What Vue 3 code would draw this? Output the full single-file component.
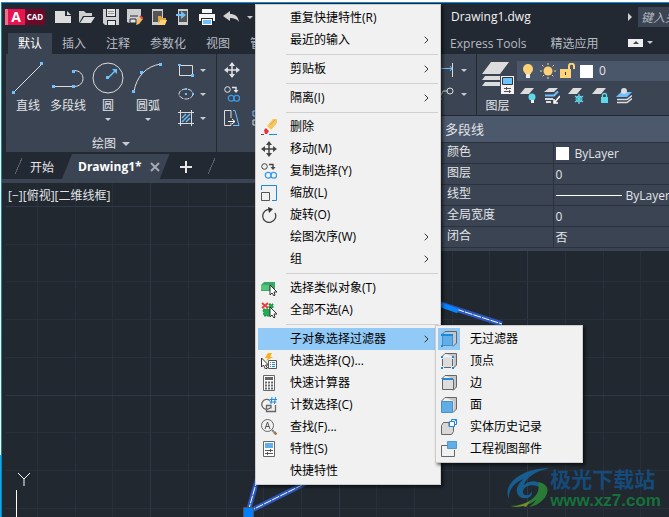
<template>
  <div class="desktop">
    <svg class="sprite" aria-hidden="true">
      <symbol id="i-erase" viewBox="0 0 16 16">
        <path d="M6 7l6-7h4v4l-6 7z" fill="#f6c65f" /><path d="M9 6l5-5" stroke="#e3a63c" />
        <path d="M5 8l5 3-1 1-5-3z" fill="#fff" />
        <path d="M3 11l2-2 3 3-2 3H4z" fill="#f0303a" />
        <path d="M0 15.500h3" stroke="#555" /><path d="M8 15.500h8" stroke="#1e88dc" />
      </symbol>
      <symbol id="i-move" viewBox="0 0 16 16">
        <path d="M8 2v12M2 8h12" stroke="currentColor" stroke-width="1.500" />
        <path d="M8 0l3 4H5zM8 16l3-4H5zM0 8l4-3v6zM16 8l-4-3v6z" fill="currentColor" />
      </symbol>
      <symbol id="i-copy" viewBox="0 0 16 16" fill="none">
        <circle cx="3.500" cy="3.500" r="2.800" stroke="currentColor" />
        <path d="M8 1.500h4v3" stroke="currentColor" stroke-width="1.400" /><path d="M9.500 4h5L12 7z" fill="currentColor" />
        <circle cx="7.200" cy="12.300" r="2.900" stroke="#3a9be8" stroke-width="1.300" />
        <circle cx="12.700" cy="12.300" r="2.900" stroke="#3a9be8" stroke-width="1.300" />
      </symbol>
      <symbol id="i-scale" viewBox="0 0 16 16" fill="none">
        <path d="M.5 5V.5h15v15H11" stroke="#1e88dc" /><path d="M.5 7.500h8v8h-8z" stroke="#555" />
      </symbol>
      <symbol id="i-rotate" viewBox="0 0 16 16" fill="none">
        <path d="M9 2.500A6.500 6.500 0 1 0 14 6" stroke="#444" stroke-width="1.300" /><path d="M7 0l5 2-4 4z" fill="#333" />
      </symbol>
      <symbol id="i-similar" viewBox="0 0 16 16">
        <path d="M0 5l3-3h11v7l-2 2H0z" fill="#3aa865" /><path d="M0 5h8v5H0z" fill="#55c47d" />
        <path d="M9 5v10l2-2 2 3 1-1-1-3h3z" fill="#fff" stroke="#333" />
      </symbol>
      <symbol id="i-none" viewBox="0 0 16 16">
        <path d="M2 7h7v7H3zM8 2h4v4H8z" fill="#22ad54" stroke="#16913f" stroke-dasharray="2 1" />
        <path d="M1 1l6 5M7 1L1 6" stroke="#ef3b3b" stroke-width="2" />
        <path d="M9 5v10l2-2 2 3 1-1-1-3h3z" fill="#fff" stroke="#333" />
      </symbol>
      <symbol id="i-quick" viewBox="0 0 16 16">
        <path d="M7 0l-3 5h3L5 8l7-4H9l2-4z" fill="#f9ae1b" />
        <path d="M.5 5v9l2-2 2 4 2-1-2-3h3z" fill="#fff" stroke="#333" />
        <path d="M7.500 7.500h8v8h-8z" fill="#fff" stroke="#555" />
        <path d="M9 9.500h1m1 0h3M9 11.500h1m1 0h3M9 13.500h1m1 0h3" stroke="#1e88dc" />
      </symbol>
      <symbol id="i-calc" viewBox="0 0 16 16">
        <path d="M2.500.5h11v15h-11z" fill="#fff" stroke="#666" /><path d="M4 2h8v3H4z" fill="#666" />
        <path d="M4 7.500h8M4 10.500h8M4 13.500h8" stroke="#666" stroke-width="2" stroke-dasharray="2 1" />
      </symbol>
      <symbol id="i-count" viewBox="0 0 16 16" fill="none">
        <path d="M9 3.500A5 5 0 1 0 10 10M5.500 8v6.500h9V8M5 8.500h5v3" stroke="#666" stroke-width="1.300" />
        <path d="M11 0l-1 7M14.500 0l-1 7M9 2.500h7M8.500 5h7" stroke="#1e88dc" />
      </symbol>
      <symbol id="i-find" viewBox="0 0 16 16" fill="none">
        <circle cx="6.500" cy="6.500" r="6" stroke="#666" /><path d="M4 10l2.500-7L9 10M5 7.500h3" stroke="#555" />
        <path d="M11 11l2 2" stroke="#888" stroke-width="2" /><path d="M13 13l2.500 2.500" stroke="#a07a50" stroke-width="2.500" />
      </symbol>
      <symbol id="i-props" viewBox="0 0 16 16" fill="none">
        <path d="M2.500.5h11v15h-11z" fill="#fff" stroke="#666" /><path d="M4 2h8v5H4z" fill="#62aee6" />
        <path d="M4 9.500h8M4 12.500h8M9.500 8v3M6.500 11v3" stroke="#555" />
      </symbol>
      <symbol id="i-cube" viewBox="0 0 16 16">
        <path d="M4 .5h11.500V12l-3 3.500V4z" fill="#c6c6c6" /><path d="M.5 4L4 .5h11.500V12L12 15.500" fill="none" stroke="#666" />
      </symbol>
      <symbol id="i-nofilter" viewBox="0 0 16 16">
        <use href="#i-cube" width="16" height="16" /><path d="M1.500 4.500h10v10h-10z" fill="#5faee8" stroke="#4a90c8" />
        <path d="M0 3h12v2H0zM0 14h2v2H0z" fill="#1e88dc" />
      </symbol>
      <symbol id="i-vertex" viewBox="0 0 16 16">
        <use href="#i-cube" width="16" height="16" /><path d="M1.500 4.500h10v10h-10z" fill="#ddd" />
        <path d="M1.500 6v7M3 14.500h7M11.500 6v7" stroke="#666" fill="none" />
        <path d="M0 3h2v2H0zM11 3h2v2h-2zM0 14h2v2H0zM11 14h2v2h-2z" fill="#1e88dc" />
      </symbol>
      <symbol id="i-edge" viewBox="0 0 16 16">
        <use href="#i-cube" width="16" height="16" /><path d="M1.500 4.500h11v10h-11z" fill="#ddd" stroke="#666" />
        <path d="M1 3h11v2H1z" fill="#1e88dc" />
      </symbol>
      <symbol id="i-face" viewBox="0 0 16 16">
        <use href="#i-cube" width="16" height="16" /><path d="M.5 4.500h11v11H.5z" fill="#5faee8" stroke="#4a90c8" />
      </symbol>
      <symbol id="i-history" viewBox="0 0 16 16">
        <path d="M.5 6.500l2-3H8v4h4.500v5l-2 3H.5z" fill="#d8d8d8" stroke="#666" />
        <path d="M8.500 2.500h5v5h-5zM10.500 2.500v-2h5v5h-2M13.500 2.500l2-2" fill="#fff" stroke="#1e88dc" />
      </symbol>
      <symbol id="i-view" viewBox="0 0 16 16">
        <path d="M6 4.500H.5v11h13V9" fill="none" stroke="#666" /><path d="M6.500.5h9v7h-9z" fill="#62aee6" stroke="#4e9ad4" />
      </symbol>

      <symbol id="i-new" viewBox="0 0 16 16"><path d="M0 2h10v5h6v7H0zM12 2l4 4h-4z" fill="#dcdcdc" /></symbol>
      <symbol id="i-open" viewBox="0 0 16 16">
        <path d="M0 14V2h5l2 2h6v3H4z" fill="#cfcfcf" /><path d="M5 8h11l-4 6H1z" fill="#dcdcdc" />
      </symbol>
      <symbol id="i-save" viewBox="0 0 16 16">
        <path d="M0 0h16v16H2l-2-2z" fill="#cfcfcf" /><path d="M3 0h10v8H3zM4 11h9v5H4z" fill="#222933" />
        <path d="M4 0h8v7H4zM5 12h7v4H5z" fill="#e4e4e4" /><path d="M5 2.500h6M5 4.500h6" stroke="#999" />
      </symbol>
      <symbol id="i-saveas" viewBox="0 0 16 16">
        <path d="M0 0h14v9l-5 5H2l-2-1z" fill="#cfcfcf" /><path d="M3 7h8M3 10h6v4H3z" stroke="#222933" fill="#e4e4e4" />
        <path d="M9 16l1-4 4-4 2 2-4 5z" fill="#f2bd5a" /><path d="M13 7l3 3" stroke="#e14a3b" stroke-width="2" />
      </symbol>
      <symbol id="i-mobile-open" viewBox="0 0 16 16">
        <path d="M1 0h11v16H1z" fill="#cfcfcf" /><path d="M2 2h9v11H2z" fill="#555" />
        <path d="M7 15V7h3l1 2h4v2H9z" fill="#e0a840" /><path d="M9 11h7l-2 5H7z" fill="#ffd27a" />
      </symbol>
      <symbol id="i-mobile-save" viewBox="0 0 16 16">
        <path d="M3 0h10v16H3z" fill="#cfcfcf" /><path d="M4 2h8v11H4z" fill="#555" />
        <path d="M1 5h5V2l5 4-5 4V7H1z" fill="#6ec1ff" />
      </symbol>
      <symbol id="i-print" viewBox="0 0 16 16">
        <path d="M3 0h10v4H3zM0 5h16v7h-2V9H2v3H0z" fill="#f4f4f4" /><path d="M3 10h10v6H3z" fill="#fff" /><path d="M4 11h8v4H4z" fill="#6ec1ff" />
      </symbol>
      <symbol id="i-undo" viewBox="0 0 16 16"><path d="M0 7l7-5v3c5 0 8 2 9 8-2-3-5-4-9-4v3z" fill="#d2d2d2" /></symbol>

      <symbol id="i-line" viewBox="0 0 32 32">
        <path d="M1 31L30 2" stroke="#dcdcdc" /><path d="M0 29h3v3H0zM28 0h3v3h-3z" fill="#6ec1ff" />
      </symbol>
      <symbol id="i-pline" viewBox="0 0 32 32">
        <path d="M1 24.500h21M22 8.500c12 0 12 16 0 16" fill="none" stroke="#dcdcdc" />
        <path d="M0 23h3v3H0zM20 23h3v3h-3zM20 8h3v3h-3z" fill="#6ec1ff" />
      </symbol>
      <symbol id="i-circle" viewBox="0 0 32 32">
        <circle cx="16" cy="16" r="15" fill="none" stroke="#dcdcdc" />
        <path d="M16 16l7-7" stroke="#6ec1ff" stroke-width="1.500" /><path d="M14 14h3v3h-3zM20 7h5v5z" fill="#6ec1ff" />
      </symbol>
      <symbol id="i-arc" viewBox="0 0 32 32">
        <path d="M2 30C4 15 14 4 29 2" fill="none" stroke="#dcdcdc" /><path d="M0 28h3v3H0zM8 9h3v3H8zM27 1h3v3h-3z" fill="#6ec1ff" />
      </symbol>
      <symbol id="i-rect" viewBox="0 0 16 16">
        <path d="M1.500 3.500h13v10h-13z" fill="none" stroke="#dcdcdc" /><path d="M0 2h3v2H0zM13 12h3v3h-3z" fill="#6ec1ff" />
      </symbol>
      <symbol id="i-ellipse" viewBox="0 0 16 16">
        <ellipse cx="8" cy="8" rx="7" ry="5" fill="none" stroke="#dcdcdc" stroke-dasharray="5 1" />
        <path d="M7 7h2v2H7zM7 2h2v2H7zM14 7h2v2h-2z" fill="#6ec1ff" />
      </symbol>
      <symbol id="i-hatch" viewBox="0 0 16 16" fill="none">
        <path d="M0 2.500h16M0 13.500h16M2.500 0v16M13.500 0v16" stroke="#dcdcdc" /><path d="M4 8l4-4M4 12l8-8M8 12l4-4" stroke="#6ec1ff" stroke-width="1.400" />
      </symbol>
      <symbol id="i-stretch" viewBox="0 0 16 16" fill="none">
        <path d="M7 8V.5H.5v15H7V13" stroke="#dcdcdc" /><path d="M9 .5h2l4 15H9" stroke="#6ec1ff" /><path d="M4 11.500h6M8 9l3 2.500L8 14" stroke="#fff" />
      </symbol>
      <symbol id="i-trim" viewBox="0 0 16 16" fill="none"><path d="M4 12L8 3l5 11" stroke="#dcdcdc" /></symbol>
      <symbol id="i-array" viewBox="0 0 16 16" fill="none">
        <path d="M1 1h5v5H1z" stroke="#6ec1ff" /><path d="M1 10h5v5H1zM10 1h5v5h-5zM10 10h5v5h-5z" stroke="#dcdcdc" />
      </symbol>
      <symbol id="i-dim" viewBox="0 0 16 16" fill="none">
        <path d="M.5 1v14M14.500 1v14" stroke="#dcdcdc" /><path d="M1 6.500h13M3 4L1 6.500 3 9M12 4l2 2.500L12 9" stroke="#6ec1ff" />
      </symbol>
      <symbol id="i-leader" viewBox="0 0 16 16" fill="none">
        <circle cx="12" cy="5" r="3" stroke="#dcdcdc" /><path d="M9 5H5L1 13" stroke="#dcdcdc" /><path d="M0 15v-5l4 3z" fill="#dcdcdc" />
      </symbol>
      <symbol id="i-layers" viewBox="0 0 32 32">
        <path d="M9 0h18l-9 12H0zM7 14h11v4H0l3-4zM5 20h13v4H0l3-4z" fill="#dcdcdc" />
        <path d="M19 14h13v18H19z" fill="#f2f2f2" /><path d="M20.500 15.500h10v7h-10z" fill="#6ec1ff" stroke="#333" />
        <path d="M22 26.500h7M22 29.500h7M24.500 25v3M27.500 28v3" stroke="#555" />
      </symbol>
      <symbol id="i-bulb" viewBox="0 0 16 16">
        <circle cx="8" cy="6" r="5" fill="#ffd27a" /><path d="M5 8h6v3H5z" fill="#ffd27a" /><path d="M6 11h4v4H6z" fill="#eee" />
      </symbol>
      <symbol id="i-sun" viewBox="0 0 16 16">
        <path d="M8 0v16M0 8h16M2 2l12 12M14 2L2 14" stroke="#ffd27a" stroke-dasharray="2 12" /><circle cx="8" cy="8" r="4.500" fill="#ffd27a" />
      </symbol>
      <symbol id="i-lock" viewBox="0 0 16 16">
        <path d="M0 6h11v9H0z" fill="#ffd27a" /><path d="M9 7V3c0-3 5-3 5 0v3" fill="none" stroke="#ffd27a" stroke-width="2" /><path d="M5 9h1v3H5z" fill="#333" />
      </symbol>
      <symbol id="i-sheet" viewBox="0 0 16 16"><path d="M5 0h9L9 6H0z" fill="#dcdcdc" /></symbol>
      <symbol id="i-loff" viewBox="0 0 16 16">
        <use href="#i-sheet" width="16" height="16" /><circle cx="12" cy="9" r="3.500" fill="#5fd8e8" /><path d="M11 12h3v3h-3z" fill="#eee" />
      </symbol>
      <symbol id="i-liso" viewBox="0 0 16 16">
        <path d="M5 0h9l-4 4H0z" fill="#dcdcdc" /><path d="M1 7.500h9l4-4" stroke="#6ec1ff" stroke-width="2" fill="none" />
        <path d="M1 11h8M2 14h5" stroke="#dcdcdc" stroke-width="2" /><path d="M16 8l-5 6M10 11v4h4" stroke="#fff" stroke-width="1.500" fill="none" />
      </symbol>
      <symbol id="i-lfreeze" viewBox="0 0 16 16">
        <use href="#i-sheet" width="16" height="16" /><path d="M11 6v10M7 8l8 6M15 8l-8 6" stroke="#5fd8e8" stroke-width="1.300" />
        <circle cx="11" cy="11" r="3" fill="none" stroke="#5fd8e8" />
      </symbol>
      <symbol id="i-llock" viewBox="0 0 16 16">
        <use href="#i-sheet" width="16" height="16" /><path d="M9 9h7v6H9z" fill="#5fd8e8" /><path d="M10.500 9V7c0-2 4-2 4 0v2" fill="none" stroke="#5fd8e8" stroke-width="1.300" />
      </symbol>
      <symbol id="i-lcurrent" viewBox="0 0 16 16">
        <path d="M5 4h11l-5 5H0z" fill="#6ec1ff" /><circle cx="8" cy="3" r="3" fill="#dcdcdc" />
        <path d="M1 11.500h10l5-4M1 14.500h10l5-4" fill="none" stroke="#dcdcdc" stroke-width="1.500" />
      </symbol>
    </svg>

    <div class="window">
      <header class="titlebar">
        <button class="logo" aria-label="A CAD"><b>A</b><span>CAD</span></button>
        <div class="quick">
          <button v-for="q in quickTools" :key="q"><svg class="ic16"><use :href="'#i-' + q" /></svg></button>
          <i class="caret"></i>
        </div>
        <div class="doc-title">Drawing1.dwg</div>
        <i class="play"></i>
        <input class="search" type="text" placeholder="键入关键字" aria-label="键入关键字" />
      </header>

      <nav class="tabs">
        <div class="tab-group">
          <button v-for="(t, i) in tabs" :key="t" :class="['tab', { active: i === 0 }]">{{ t }}</button>
        </div>
        <div class="tab-group right">
          <button class="tab">Express Tools</button>
          <button class="tab">精选应用</button>
          <button class="collapse" aria-label="最小化"><i class="caret up"></i></button>
          <i class="caret"></i>
        </div>
      </nav>

      <section class="ribbon">
        <div class="panel draw">
          <div class="draw-tools">
            <button v-for="d in drawTools" :key="d.label" class="big">
              <svg class="ic32"><use :href="'#i-' + d.icon" /></svg>
              <span>{{ d.label }}</span>
              <i v-if="d.caret" class="caret"></i>
            </button>
            <div class="stack">
              <button v-for="s in ['rect', 'ellipse', 'hatch']" :key="s" class="small">
                <svg class="ic16"><use :href="'#i-' + s" /></svg><i class="caret"></i>
              </button>
            </div>
          </div>
          <button class="panel-title">绘图 <i class="caret large"></i></button>
        </div>
        <div class="panel modify">
          <div class="stack">
            <button v-for="s in ['move', 'copy', 'stretch']" :key="s" class="small"><svg class="ic16"><use :href="'#i-' + s" /></svg></button>
          </div>
          <div class="stack">
            <button v-for="s in ['rotate', 'trim', 'array']" :key="s" class="small"><svg class="ic16"><use :href="'#i-' + s" /></svg></button>
          </div>
        </div>
        <div class="panel annotate">
          <div class="stack">
            <button v-for="s in ['dim', 'leader']" :key="s" class="small">
              <svg class="ic16"><use :href="'#i-' + s" /></svg><i class="caret"></i>
            </button>
          </div>
        </div>
        <div class="panel layers">
          <button class="big"><svg class="ic32"><use href="#i-layers" /></svg><span>图层</span></button>
          <div class="layer-side">
            <button class="layer-combo">
              <svg v-for="s in ['bulb', 'sun', 'lock']" :key="s" class="ic16"><use :href="'#i-' + s" /></svg>
              <i class="swatch"></i><span>0</span>
            </button>
            <div class="layer-row">
              <button v-for="s in ['loff', 'liso', 'lfreeze', 'llock', 'lcurrent']" :key="s"><svg class="ic16"><use :href="'#i-' + s" /></svg></button>
            </div>
          </div>
        </div>
      </section>

      <nav class="docs">
        <i class="slash"></i>
        <button class="doc">开始</button>
        <button class="doc active"><b>Drawing1*</b>
          <svg width="10" height="10" viewBox="0 0 10 10"><path d="M1 1l8 8M9 1L1 9" stroke="#a4abb5" stroke-width="2" /></svg>
        </button>
        <button class="plus" aria-label="+"><svg width="12" height="12" viewBox="0 0 12 12"><path d="M6 0v12M0 6h12" stroke="#e6e6e6" stroke-width="2" /></svg></button>
        <i class="slash"></i>
      </nav>

      <main class="canvas">
        <svg class="drawing">
          <g shape-rendering="crispEdges">
            <path v-for="(x, i) in gridX" :key="'x' + i" :d="`M${x} 0V2000`" :class="['grid', { major: i % 5 === 3 }]" />
            <path v-for="(y, i) in gridY" :key="'y' + i" :d="`M4 ${y}H4000`" :class="['grid', { major: i % 5 === 0 }]" />
          </g>
          <path class="glow" d="M246 329L257 290M246 329L310 297M420 115L500 141" />
          <path class="core" d="M246 329L257 290M246 329L310 297M420 115L500 141" />
          <path d="M439 122L456 128" stroke="#0a84ff" stroke-width="5" />
          <path class="grip" d="M241.500 324.500h10v10h-10z" />
          <path class="ucs" d="M16 290l6 6 6-6M22 296v7M14.500 307v40" />
        </svg>
        <div class="viewport-label">[−][俯视][二维线框]</div>
      </main>
    </div>

    <section class="props">
      <h2>多段线</h2>
      <table>
        <tbody>
          <tr v-for="p in props" :key="p.name">
            <th scope="row">{{ p.name }}</th>
            <td><div class="cell"><i v-if="p.swatch" class="swatch"></i><i v-if="p.line" class="rule"></i>{{ p.value }}</div></td>
          </tr>
        </tbody>
      </table>
    </section>

    <div class="watermark">
      <svg width="44" height="42" viewBox="0 0 44 42">
        <path d="M3 32C-4 18 14 1 44 1 30 4 20 10 18 18c6-6 17-5 16 3-5-5-17-3-17 4 0 5 9 4 8-1 4 6-7 10-12 5-5-5-1-13 5-17C9 15 2 23 3 32z" fill="#17649a" />
        <path d="M32 15c18 3 8 22-9 25 4-3 6-5 7-7-8 6-16 8-26 6 18-1 32-10 28-24z" fill="#2c8538" />
        <path d="M4 39c7 1 13-1 20-5l-4 6-3-1c-5 1-9 1-13 0z" fill="#8c9526" />
      </svg>
      <div class="wm-text"><b>极光下载站</b><strong>www.xz7.com</strong></div>
    </div>

    <div class="menu" role="menu">
      <template v-for="(m, i) in menu" :key="i">
        <hr v-if="!m" />
        <button v-else role="menuitem" :class="{ hot: m.hot }">
          <svg v-if="m.icon" class="ic16"><use :href="'#i-' + m.icon" /></svg>
          <span>{{ m.label }}</span>
          <svg v-if="m.sub" class="arrow" viewBox="0 0 5 8"><path d="M.7.7L4 4 .7 7.300" /></svg>
        </button>
      </template>
    </div>

    <div class="menu submenu" role="menu">
      <button v-for="(m, i) in filters" :key="m.label" role="menuitem" :class="{ checked: i === 0 }">
        <svg class="ic16"><use :href="'#i-' + m.icon" /></svg>
        <span>{{ m.label }}</span>
      </button>
    </div>
  </div>
</template>

<script setup>
const quickTools = ['new', 'open', 'save', 'saveas', 'mobile-open', 'mobile-save', 'print', 'undo'];
const tabs = ['默认', '插入', '注释', '参数化', '视图', '管理'];

const drawTools = [
  { label: '直线', icon: 'line' },
  { label: '多段线', icon: 'pline' },
  { label: '圆', icon: 'circle', caret: true },
  { label: '圆弧', icon: 'arc', caret: true }
];

const props = [
  { name: '颜色', value: 'ByLayer', swatch: true },
  { name: '图层', value: '0' },
  { name: '线型', value: 'ByLayer', line: true },
  { name: '全局宽度', value: '0' },
  { name: '闭合', value: '否' }
];

// null draws a separator
const menu = [
  { label: '重复快捷特性(R)' },
  { label: '最近的输入', sub: true },
  null,
  { label: '剪贴板', sub: true },
  null,
  { label: '隔离(I)', sub: true },
  null,
  { label: '删除', icon: 'erase' },
  { label: '移动(M)', icon: 'move' },
  { label: '复制选择(Y)', icon: 'copy' },
  { label: '缩放(L)', icon: 'scale' },
  { label: '旋转(O)', icon: 'rotate' },
  { label: '绘图次序(W)', sub: true },
  { label: '组', sub: true },
  null,
  { label: '选择类似对象(T)', icon: 'similar' },
  { label: '全部不选(A)', icon: 'none' },
  null,
  { label: '子对象选择过滤器', sub: true, hot: true },
  { label: '快速选择(Q)...', icon: 'quick' },
  { label: '快速计算器', icon: 'calc' },
  { label: '计数选择(C)', icon: 'count' },
  { label: '查找(F)...', icon: 'find' },
  { label: '特性(S)', icon: 'props' },
  { label: '快捷特性' }
];

const filters = [
  { label: '无过滤器', icon: 'nofilter' },
  { label: '顶点', icon: 'vertex' },
  { label: '边', icon: 'edge' },
  { label: '面', icon: 'face' },
  { label: '实体历史记录', icon: 'history' },
  { label: '工程视图部件', icon: 'view' }
];

const step = 37.7;
const gridX = Array.from({ length: 40 }, (_, i) => Math.round(35 + i * step) + 0.5);
const gridY = Array.from({ length: 30 }, (_, i) => Math.round(23 + i * step) + 0.5);
</script>

<style>
body {
  background: #fff;
  overflow: hidden;
}
</style>

<style scoped>
.desktop {
  position: relative;
  box-sizing: border-box;
  height: 100vh;
  padding: 2px 0 0 1px;
  overflow: hidden;
  background: linear-gradient(#fff 16px, #f0f0f0 18px, #fff 88%, #00aeef 88%);
  font: 12px/16px "Open Sans", "Noto Sans CJK SC", sans-serif;
  color: #e2e4e8;
}
.sprite {
  position: absolute;
  width: 0;
  height: 0;
}
button {
  font: inherit;
  color: inherit;
  background: none;
  border: 0;
  padding: 0;
}
.ic16 {
  display: block;
  flex: none;
  width: 16px;
  height: 16px;
}
.ic32 {
  display: block;
  flex: none;
  width: 32px;
  height: 32px;
}
.caret {
  flex: none;
  border: 3px solid transparent;
  border-top-color: #c8ccd2;
  border-bottom: 0;
}
.caret.large {
  border-width: 4px 4px 0;
}
.window {
  display: flex;
  flex-direction: column;
  height: 100%;
  background: #222933;
  border-top: 1px solid #0a8fdc;
  border-left: 1px solid #1683b8;
}

.titlebar {
  display: flex;
  align-items: center;
  height: 28px;
  flex: none;
  padding-left: 3px;
}
.logo {
  display: flex;
  align-items: center;
  width: 40px;
  height: 16px;
  background: #6d0829;
  color: #fff;
}
.logo b {
  width: 16px;
  padding-right: 1px;
  border-left: 3px solid #f0708c;
  background: #e8134f;
  font-size: 14px;
}
.logo span {
  flex: 1;
  font-size: 8px;
  font-weight: 700;
}
.quick {
  display: flex;
  align-items: center;
  gap: 8px;
  width: 396px;
  margin-left: 10px;
}
.doc-title {
  flex: 1;
  font-size: 12px;
  color: #f2f2f2;
}
.play {
  border: 4px solid transparent;
  border-left-color: #d0d0d0;
  border-right: 0;
  margin-right: 6px;
}
.search {
  box-sizing: border-box;
  width: 31px;
  height: 20px;
  padding: 0 0 0 3px;
  border: 0;
  background: #3b4453;
  font: italic 12px "Open Sans", "Noto Sans CJK SC", sans-serif;
}
.search::placeholder {
  color: #b5bac2;
  opacity: 1;
}

.tabs {
  display: flex;
  flex: none;
  height: 23px;
  padding: 0 0 0 6px;
}
.tab-group {
  display: flex;
  align-items: flex-end;
  flex: none;
}
.tab-group.right {
  gap: 4px;
  margin-left: 156px;
}
.tab-group.right .caret,
.collapse {
  align-self: center;
}
.tab {
  height: 21px;
  padding: 0 10px;
  color: #b6bbc3;
  white-space: nowrap;
}
.tab.active {
  background: #3b4453;
  color: #fff;
}
.collapse {
  display: flex;
  align-items: center;
  justify-content: center;
  width: 15px;
  height: 8px;
  margin-left: 16px;
  background: #eee;
}
.caret.up {
  border: 3px solid transparent;
  border-bottom-color: #444;
  border-top: 0;
}

.ribbon {
  display: flex;
  flex: none;
  height: 98px;
  margin-left: 4px;
  background: #3b4453;
}
.panel {
  display: flex;
  flex: none;
  border-right: 1px solid #222933;
}
.draw {
  flex-direction: column;
  justify-content: space-between;
  width: 210px;
}
.draw-tools {
  display: flex;
  padding: 8px 0 0 2px;
}
.big {
  display: flex;
  flex-direction: column;
  align-items: center;
  width: 40px;
  white-space: nowrap;
}
.big span {
  padding: 4px 0;
}
.stack {
  display: flex;
  flex-direction: column;
  gap: 8px;
}
.draw-tools .stack {
  margin-left: 10px;
}
.small {
  display: flex;
  align-items: center;
  gap: 6px;
}
.panel-title {
  display: flex;
  align-items: center;
  justify-content: center;
  gap: 6px;
}
.modify {
  gap: 12px;
  width: 210px;
  padding: 8px 0 0 7px;
  border: 0;
}
.annotate {
  width: 38px;
  padding-top: 8px;
  margin-left: 4px;
}
.annotate .small {
  gap: 7px;
}
.layers {
  flex: 1;
  min-width: 0;
  border: 0;
}
.layers .big {
  flex: none;
  padding: 8px 0 0 1px;
}
.layer-side {
  flex: 1;
  min-width: 0;
  padding-top: 7px;
}
.layer-combo {
  display: flex;
  align-items: center;
  gap: 4px;
  width: 100%;
  height: 20px;
  padding-left: 3px;
  background: #4a566a;
}
.swatch {
  flex: none;
  width: 13px;
  height: 13px;
  margin-right: 2px;
  background: #fff;
}
.layer-row {
  display: flex;
  gap: 8px;
  padding: 7px 0 0 3px;
}

.docs {
  display: flex;
  align-items: center;
  flex: none;
  height: 27px;
  padding-left: 13px;
  border-bottom: 4px solid #3b4453;
}
.doc {
  padding: 4px 8px 0;
}
.doc.active {
  display: flex;
  align-items: center;
  align-self: flex-end;
  gap: 8px;
  height: 25px;
  padding: 0 10px 0 16px;
  background: #3b4453;
  clip-path: polygon(10px 0, 100% 0, calc(100% - 10px) 100%, 0 100%);
  color: #fff;
}
.slash {
  width: 7px;
  height: 16px;
  background: linear-gradient(to bottom right, transparent 46%, #596272 47%, #596272 54%, transparent 55%);
}
.plus {
  margin: 6px 16px 0 10px;
}

.canvas {
  position: relative;
  flex: 1;
  background: #212830;
}
.drawing {
  position: absolute;
  width: 100%;
  height: 100%;
}
.grid {
  stroke: #28303b;
}
.grid.major {
  stroke: #303848;
}
.glow {
  fill: none;
  stroke: #2a58c0;
  stroke-width: 5;
}
.core {
  fill: none;
  stroke: #fff;
  stroke-dasharray: 8 1;
}
.grip {
  fill: #0080ff;
  stroke: #555;
}
.ucs {
  fill: none;
  stroke: #fff;
}
.viewport-label {
  position: relative;
  padding: 5px 6px;
}

.props {
  position: absolute;
  top: 115px;
  left: 438px;
  right: 0;
  padding-bottom: 3px;
  background: #3b4453;
  border-top: 1px solid #222933;
}
.props h2 {
  margin: 0;
  padding: 0 7px;
  font: 13px/26px "Open Sans", "Noto Sans CJK SC", sans-serif;
  background: #4c586c;
}
.props table {
  width: 100%;
  border-collapse: collapse;
  table-layout: fixed;
}
.props tr {
  height: 21px;
  border: solid #2b323e;
  border-width: 1px 0;
}
.props th {
  box-sizing: border-box;
  width: 115px;
  padding: 0 0 3px 9px;
  border-right: 1px solid #2b323e;
  font-weight: 400;
  text-align: left;
}
.props td {
  padding: 1px 0 0 2px;
  overflow: hidden;
}
.cell {
  display: flex;
  align-items: center;
  gap: 4px;
  white-space: nowrap;
}
.rule {
  flex: none;
  width: 66px;
  height: 1px;
  background: #fff;
}

.menu {
  position: absolute;
  top: 4px;
  left: 255px;
  box-sizing: border-box;
  width: 186px;
  padding: 2px;
  background: #f1f1f1;
  border: 1px solid #ccc;
  box-shadow: 2px 2px 3px rgba(0, 0, 0, 0.6);
  color: #000;
}
.menu button {
  display: flex;
  align-items: center;
  width: 100%;
  height: 22px;
  padding-right: 9px;
  text-align: left;
}
.menu .ic16 {
  margin: 0 0 0 3px;
  color: #444;
}
.menu span {
  flex: 1;
  padding-left: 32px;
}
.menu .ic16 + span {
  padding-left: 13px;
}
.menu hr {
  height: 1px;
  margin: 3px 0 3px 28px;
  border: 0;
  background: #d0d0d0;
}
.menu .hot {
  background: #91c9f7;
}
.arrow {
  width: 5px;
  height: 8px;
  fill: none;
  stroke: #333;
}
.submenu {
  top: 325px;
  left: 435px;
  width: 148px;
}
.checked {
  background: linear-gradient(to right, #91c9f7 22px, transparent 22px);
}

.watermark {
  position: absolute;
  right: 8px;
  bottom: 6px;
  display: flex;
  opacity: 0.9;
}
.wm-text {
  display: flex;
  flex-direction: column;
}
.wm-text b {
  color: #154f82;
  font-size: 21px;
  line-height: 24px;
}
.wm-text strong {
  color: #157a3c;
  font: 700 17px/20px "Liberation Sans", sans-serif;
}
</style>
